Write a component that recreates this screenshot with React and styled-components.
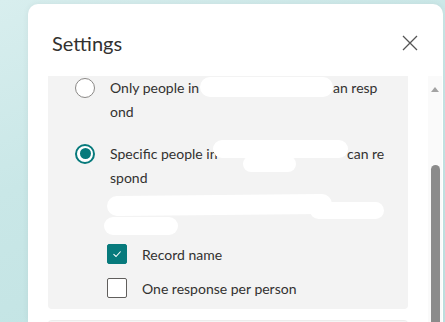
import React from "react";
import styled, { createGlobalStyle } from "styled-components";

const Global = createGlobalStyle`
  html, body { margin: 0; padding: 0; }
  body {
    width: 445px;
    height: 322px;
    overflow: hidden;
    background: linear-gradient(160deg, #d8eeee 0%, #c9e7e7 40%, #bfe2e2 100%);
    font-family: "Lato", "Segoe UI", "Noto Sans", sans-serif;
    color: #323130;
  }
`;

const Stage = styled.div`
  padding: 4px 2px 0 28px;
  height: 322px;
  box-sizing: border-box;
  overflow: hidden;
`;

const Card = styled.div`
  background: #ffffff;
  border-radius: 10px 10px 0 0;
  height: 100%;
  overflow: hidden;
  box-shadow: 0 0 6px rgba(0, 0, 0, 0.06);
  display: flex;
  flex-direction: column;
`;

const Header = styled.div`
  flex: none;
  height: 72px;
  display: flex;
  align-items: center;
  justify-content: space-between;
  padding: 6px 24px 0 24px;
  box-sizing: border-box;
`;

const Title = styled.h1`
  margin: 0;
  font-size: 20px;
  font-weight: 400;
  color: #323130;
`;

const CloseButton = styled.button`
  border: none;
  background: transparent;
  padding: 0;
  width: 16px;
  height: 16px;
  display: flex;
  margin-right: 1px;
  cursor: pointer;
`;

const Body = styled.div`
  display: flex;
  flex: 1;
  min-height: 0;
`;

const Content = styled.div`
  padding-left: 20px;
  width: 360px;
  overflow: hidden;
`;

const Panel = styled.div`
  position: relative;
  background: #f3f3f3;
  border-radius: 0 0 4px 4px;
  padding: 0 0 11px 0;
`;

const NextPanel = styled.div`
  margin-top: 11px;
  height: 20px;
  background: #f5f5f5;
  border-top: 1px solid #ececec;
  border-radius: 4px 4px 0 0;
`;

const RadioRow = styled.div`
  display: flex;
  align-items: flex-start;
  padding-left: 27px;
  margin-top: ${(p) => p.$top || 0}px;
`;

const RadioCircle = styled.span`
  flex: none;
  width: 20px;
  height: 20px;
  border-radius: 50%;
  box-sizing: border-box;
  margin-top: 1.5px;
  border: ${(p) => (p.$checked ? "2.5px solid #077a7c" : "1px solid #8a8886")};
  background: #ffffff;
  display: flex;
  align-items: center;
  justify-content: center;
  &::after {
    content: "";
    display: ${(p) => (p.$checked ? "block" : "none")};
    width: 11px;
    height: 11px;
    border-radius: 50%;
    background: #077a7c;
  }
`;

const RadioText = styled.div`
  margin-left: 15px;
  font-size: 14px;
  line-height: 23.5px;
  color: #323130;
`;

const Line = styled.div`
  display: flex;
  white-space: nowrap;
`;

const Clip = styled.span`
  display: inline-block;
  width: ${(p) => p.$w}px;
  overflow: hidden;
`;

const PeopleBlock = styled.div`
  height: 55px;
`;

const CheckRow = styled.label`
  display: flex;
  align-items: center;
  padding-left: 59px;
  height: 20px;
  margin-top: ${(p) => p.$top || 0}px;
  font-size: 14px;
  color: #323130;
`;

const CheckBox = styled.span`
  flex: none;
  width: 20px;
  height: 20px;
  box-sizing: border-box;
  border-radius: 2px;
  border: 1px solid ${(p) => (p.$checked ? "#077a7c" : "#605e5c")};
  background: ${(p) => (p.$checked ? "#077a7c" : "#ffffff")};
  display: flex;
  align-items: center;
  justify-content: center;
`;

const CheckLabel = styled.span`
  margin-left: 15px;
`;

const Redact = styled.span`
  position: absolute;
  left: ${(p) => p.$x}px;
  top: ${(p) => p.$y}px;
  width: ${(p) => p.$w}px;
  height: ${(p) => p.$h}px;
  border-radius: ${(p) => p.$h / 2}px;
  background: #ffffff;
  transform: rotate(${(p) => p.$r || 0}deg);
`;

const ScrollTrack = styled.div`
  margin-left: 20px;
  width: 14px;
  background: #fafafa;
  display: flex;
  flex-direction: column;
  align-items: center;
`;

const ArrowUp = styled.span`
  margin-top: 11px;
  width: 0;
  height: 0;
  border-left: 4.5px solid transparent;
  border-right: 4.5px solid transparent;
  border-bottom: 5px solid #a3a3a3;
`;

const Thumb = styled.span`
  margin-top: 73px;
  width: 9px;
  flex: 1;
  background: #8b8b8b;
  border-radius: 5px 5px 0 0;
`;

const blobs = [
  { x: 152, y: 1, w: 133, h: 20 },
  { x: 165, y: 64, w: 135, h: 18 },
  { x: 195, y: 80, w: 53, h: 16 },
  { x: 59, y: 119, w: 225, h: 20, r: -0.5 },
  { x: 262, y: 126, w: 74, h: 17 },
  { x: 56, y: 141, w: 74, h: 18 },
];

export default function App() {
  return (
    <>
      <Global />
      <Stage>
        <Card>
          <Header>
            <Title>Settings</Title>
            <CloseButton aria-label="Close">
              <svg width="16" height="16" viewBox="0 0 16 16">
                <path d="M1 1 L15 15 M15 1 L1 15" stroke="#555555" strokeWidth="1.3" fill="none" />
              </svg>
            </CloseButton>
          </Header>
          <Body>
            <Content>
              <Panel>
                <RadioRow>
                  <RadioCircle />
                  <RadioText>
                    <Line>
                      <Clip $w={223}>Only people in</Clip>
                      <span>an resp</span>
                    </Line>
                    <Line>ond</Line>
                  </RadioText>
                </RadioRow>
                <RadioRow $top={19}>
                  <RadioCircle $checked />
                  <RadioText>
                    <Line>
                      <Clip $w={237}>Specific people in</Clip>
                      <span>can re</span>
                    </Line>
                    <Line>spond</Line>
                  </RadioText>
                </RadioRow>
                <PeopleBlock />
                <CheckRow>
                  <CheckBox $checked>
                    <svg width="10" height="8" viewBox="0 0 10 8">
                      <path d="M1.5 4.2 L4 6.5 L8.6 1.5" stroke="#ffffff" strokeWidth="1.1" fill="none" />
                    </svg>
                  </CheckBox>
                  <CheckLabel>Record name</CheckLabel>
                </CheckRow>
                <CheckRow $top={14}>
                  <CheckBox />
                  <CheckLabel>One response per person</CheckLabel>
                </CheckRow>
                {blobs.map((b, i) => (
                  <Redact key={i} $x={b.x} $y={b.y} $w={b.w} $h={b.h} $r={b.r} />
                ))}
              </Panel>
              <NextPanel />
            </Content>
            <ScrollTrack>
              <ArrowUp />
              <Thumb />
            </ScrollTrack>
          </Body>
        </Card>
      </Stage>
    </>
  );
}
